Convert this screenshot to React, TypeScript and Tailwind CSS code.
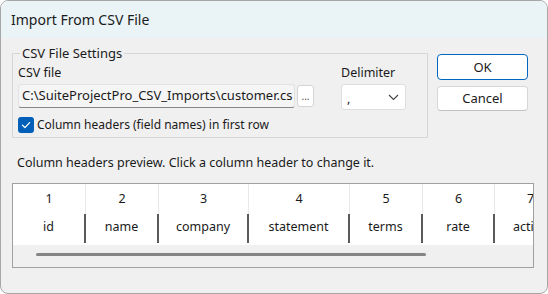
import React from "react";

const cols = [
  { n: "1", name: "id", w: 73 },
  { n: "2", name: "name", w: 73 },
  { n: "3", name: "company", w: 90 },
  { n: "4", name: "statement", w: 101 },
  { n: "5", name: "terms", w: 73 },
  { n: "6", name: "rate", w: 72 },
  { n: "7", name: "active", w: 72 },
];

export default function App() {
  return (
    <div
      className="w-[548px] h-[294px] bg-[#f0f0f0] border border-[#a7a7a7] rounded-[8px] overflow-hidden flex flex-col text-[12.5px] text-[#1a1a1a]"
      style={{ fontFamily: '"Noto Sans", "Liberation Sans", sans-serif' }}
    >
      <div className="h-[37px] shrink-0 bg-[#eaf4f6] flex items-center pl-[10px] text-[14px] text-[#1b1b1b]">
        Import From CSV File
      </div>
      <div className="flex flex-col pl-[11px] pt-[7px]">
        <div className="flex">
          <fieldset className="w-[416px] h-[93px] border border-[#d6d6d6] rounded-[1px] pl-[5px] pr-[4px]">
            <legend className="ml-[2px] px-[2px] text-[13px] leading-[16px] text-[#1b1b1b]">CSV File Settings</legend>
            <div className="flex mt-[4px]">
              <div className="flex flex-col w-[318px]">
                <div className="leading-[16px]">CSV file</div>
                <div className="flex mt-[3px] items-start">
                  <div className="w-[277px] h-[24px] bg-[#f5f5f5] border border-[#e2e2e2] border-b-[#868686] rounded-[3px] flex items-center pl-[3px] overflow-hidden whitespace-nowrap text-[13px]">
                    C:\SuiteProjectPro_CSV_Imports\customer.cs
                  </div>
                  <div className="ml-[2px] mt-[1px] w-[17px] h-[22px] bg-white border border-[#d4d4d4] rounded-[3px] flex items-center justify-center text-[10px] text-[#555]">
                    ...
                  </div>
                </div>
                <div className="flex items-center mt-[9px] h-[16px]">
                  <div className="w-[16px] h-[16px] rounded-[3px] bg-[#005fb8] flex items-center justify-center">
                    <svg width="10" height="10" viewBox="0 0 10 10">
                      <path d="M1.5 5.2 L4 7.6 L8.6 2.6" fill="none" stroke="white" strokeWidth="1.3" strokeLinecap="round" strokeLinejoin="round" />
                    </svg>
                  </div>
                  <span className="ml-[3px] text-[12px] leading-[16px]">Column headers (field names) in first row</span>
                </div>
              </div>
              <div className="flex flex-col ml-[5px]">
                <div className="leading-[16px]">Delimiter</div>
                <div className="mt-[3px] w-[65px] h-[26px] bg-white border border-[#dedede] rounded-[3px] flex items-center justify-between pl-[5px] pr-[6px]">
                  <span className="leading-none mt-[4px]">,</span>
                  <svg width="11" height="7" viewBox="0 0 11 7">
                    <path d="M1 1 L5.5 5.5 L10 1" fill="none" stroke="#444" strokeWidth="1.1" />
                  </svg>
                </div>
              </div>
            </div>
          </fieldset>
          <div className="flex flex-col ml-[9px] pt-[9px] gap-[6px]">
            <button className="w-[91px] h-[26px] bg-white border border-[#0067c0] rounded-[4px] text-[13px] text-[#1b1b1b] leading-none">
              OK
            </button>
            <button className="w-[91px] h-[25px] bg-white border border-[#d6d6d6] border-b-[#c2c2c2] rounded-[4px] text-[13px] text-[#1b1b1b] leading-none">
              Cancel
            </button>
          </div>
        </div>
        <div className="mt-[17px] ml-[5px] leading-[16px]">
          Column headers preview. Click a column header to change it.
        </div>
        <div className="mt-[12px] w-[522px] h-[85px] border border-[#a0a0a0] flex flex-col overflow-hidden">
          <div className="h-[61px] bg-white flex overflow-hidden">
            {cols.map((c, i) => (
              <div key={i} className="shrink-0 flex flex-col" style={{ width: c.w }}>
                <div className="h-[30px] flex items-center justify-center border-r border-[#e8e8e8]">
                  {c.n}
                </div>
                <div className="h-[31px] flex items-start">
                  <div className="flex-1 h-[29px] flex items-center justify-center pb-[3px]">{c.name}</div>
                  <div className="w-[2px] h-[29px] bg-[#5a5a5a]" />
                </div>
              </div>
            ))}
          </div>
          <div className="flex-1 flex items-start pt-[8px] pl-[23px]">
            <div className="w-[390px] h-[3px] rounded-full bg-[#858585]" />
          </div>
        </div>
      </div>
    </div>
  );
}
